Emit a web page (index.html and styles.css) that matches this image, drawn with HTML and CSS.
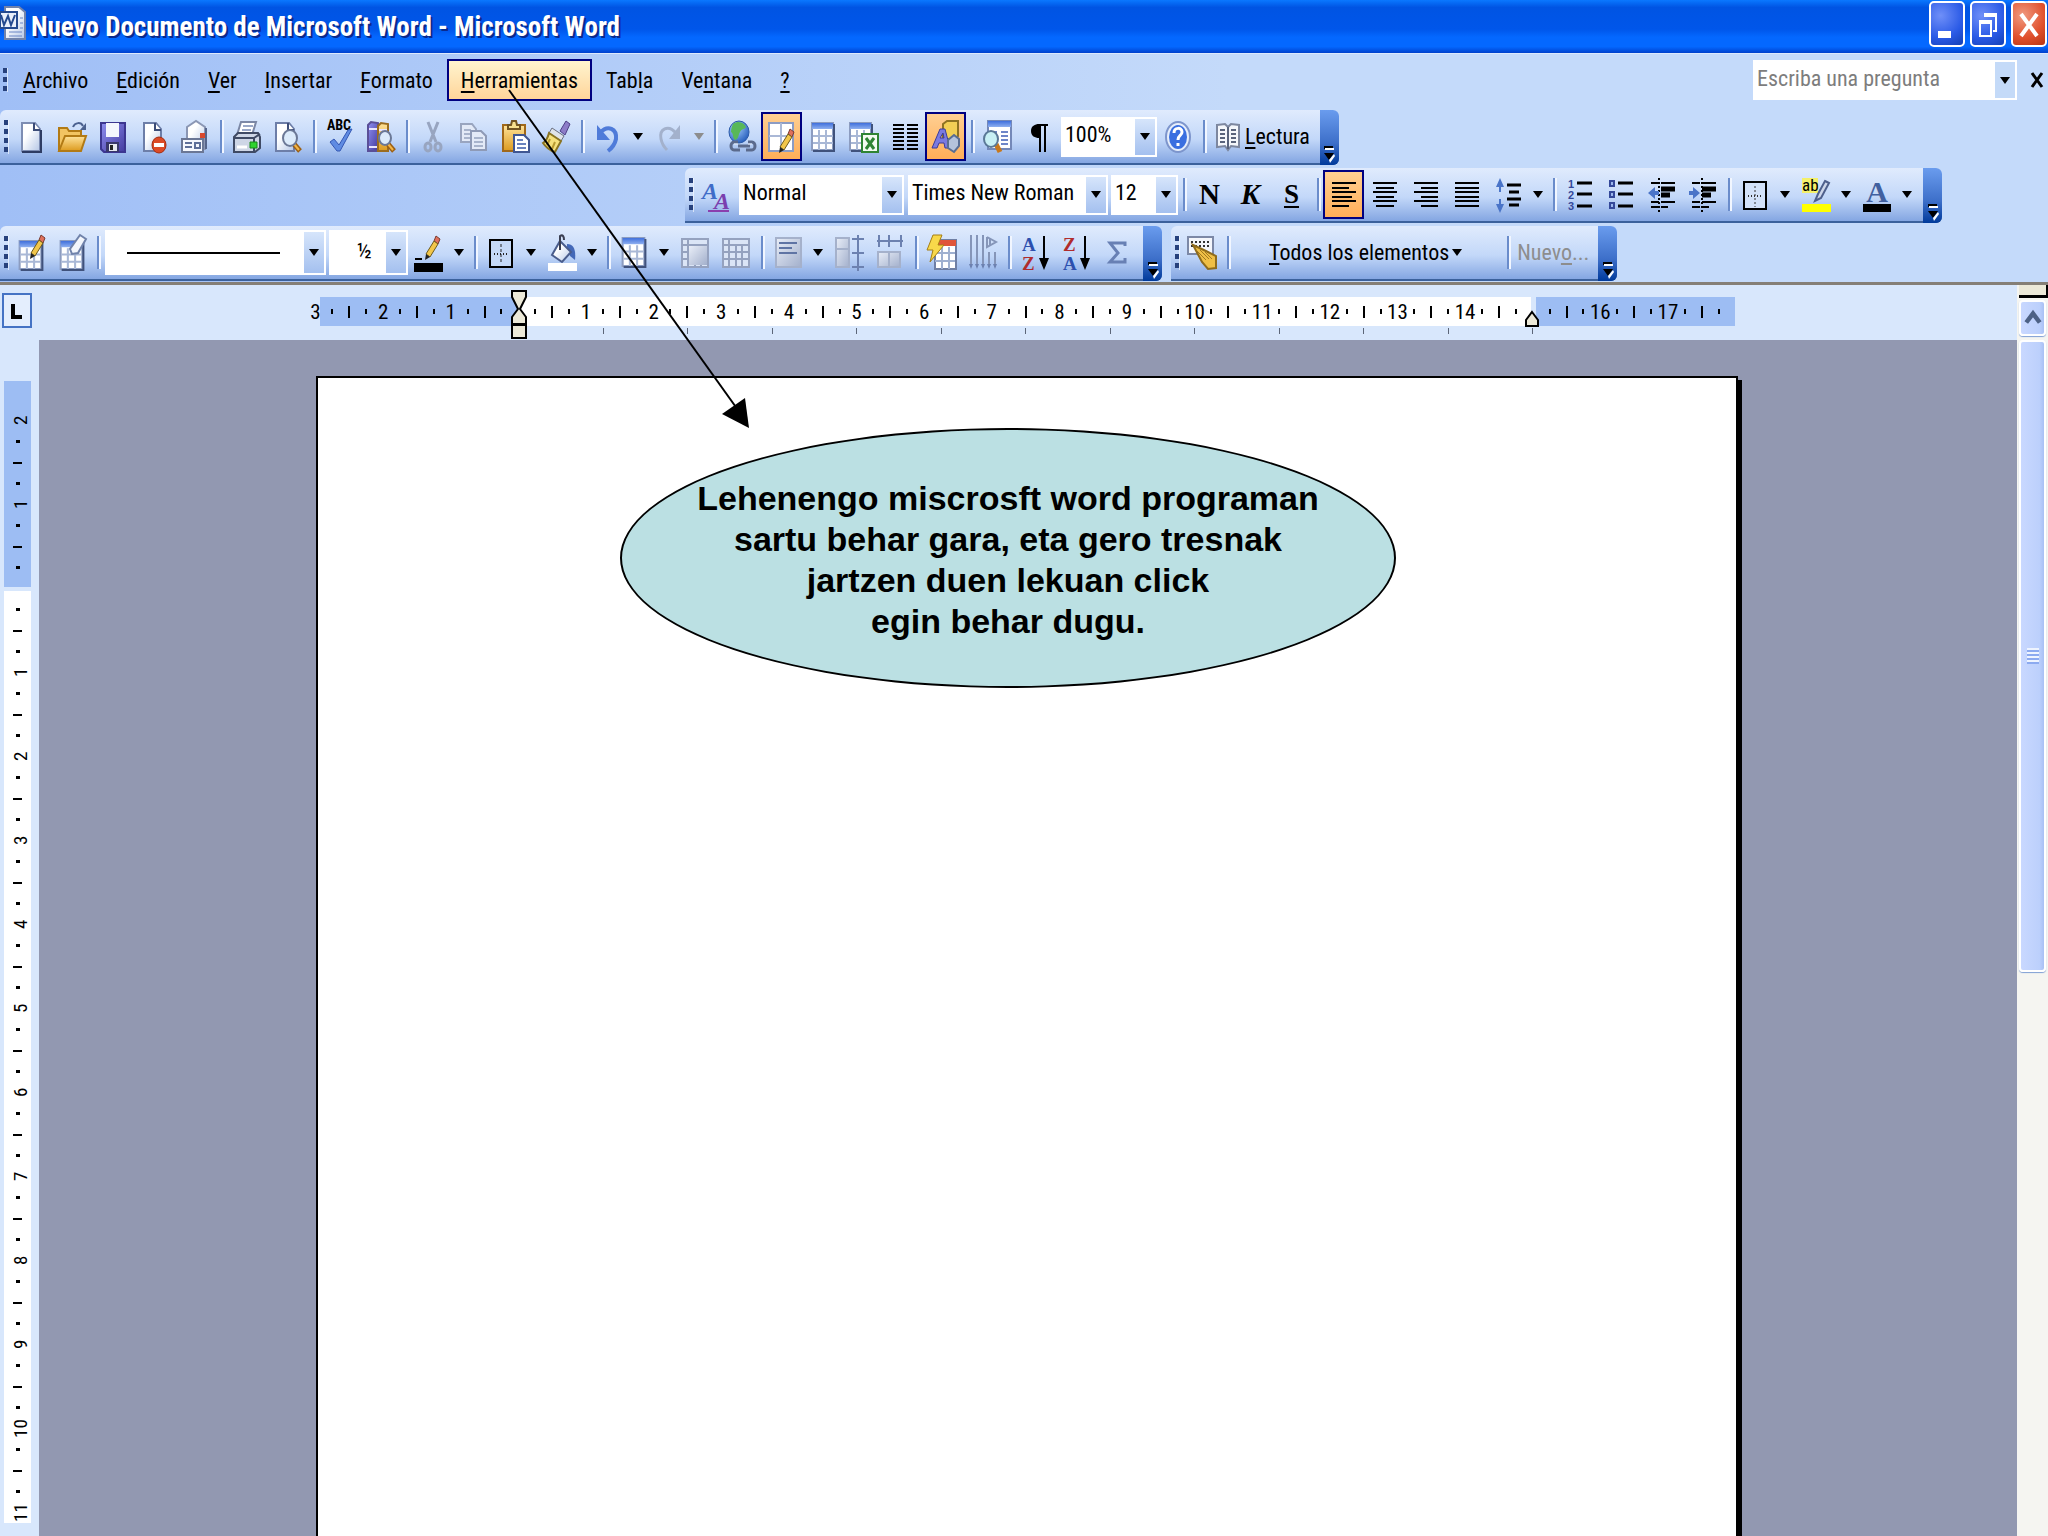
FILE: index.html
```html
<!DOCTYPE html>
<html lang="es">
<head>
    <meta charset="UTF-8">
    <meta name="viewport" content="width=device-width, initial-scale=1.0">
    <title>Nuevo Documento de Microsoft Word - Microsoft Word</title>
    <link rel="stylesheet" href="styles.css">
</head>
<body>

    <!-- shared gradients and repeated icon parts -->
    <svg class="defs" width="0" height="0" aria-hidden="true">
        <defs>
            <linearGradient id="gPaper" x1="0" y1="0" x2="1" y2="1"><stop offset="0.35" stop-color="#fff"/><stop offset="1" stop-color="#b4c6e6"/></linearGradient>
            <linearGradient id="gGrey" x1="0" y1="0" x2="1" y2="1"><stop offset="0" stop-color="#e9eef8"/><stop offset="1" stop-color="#a3b0cc"/></linearGradient>
            <linearGradient id="gFolder" x1="0" y1="0" x2="0" y2="1"><stop offset="0" stop-color="#ffe39a"/><stop offset="1" stop-color="#dc9a1e"/></linearGradient>
            <linearGradient id="gViolet" x1="0" y1="0" x2="1" y2="1"><stop offset="0" stop-color="#8f8ff0"/><stop offset="1" stop-color="#433a9e"/></linearGradient>
            <linearGradient id="gBlue" x1="0" y1="0" x2="0" y2="1"><stop offset="0" stop-color="#3f6fdc"/><stop offset="1" stop-color="#8fb0f0"/></linearGradient>
            <radialGradient id="gGlobe" cx="0.35" cy="0.3" r="0.8"><stop offset="0" stop-color="#a9d2ff"/><stop offset="1" stop-color="#1d56b8"/></radialGradient>
        </defs>
        <symbol id="pencil" viewBox="0 0 18 26">
            <path d="M13 1l4 3-2 5-4-3z" fill="#e0705c" stroke="#7a3b30"/>
            <path d="M11 6l4 3-8 13-4-3z" fill="#f2c64a" stroke="#6d5a1c"/>
            <path d="M3 19l4 3-5 3z" fill="#222"/>
        </symbol>
        <symbol id="grid" viewBox="0 0 24 30">
            <path d="M1 1h21v27H1z" fill="#fff" stroke="#8c9cc0" stroke-width="2"/>
            <path d="M1 1h21v6H1z" fill="url(#gBlue)"/>
            <path d="M2 14h20M2 21h20M8 8v20M15 8v20" stroke="#a9b8d6" stroke-width="2" fill="none"/>
            <path d="M23 2v27H2" stroke="#40527c" stroke-width="2" fill="none"/>
        </symbol>
        <symbol id="greygrid" viewBox="0 0 28 30">
            <path d="M1 1h26v28H1z" fill="#dbe5f6" stroke="#95a2bf" stroke-width="2"/>
            <path d="M1 7h26M7 1v28M14 7v22M20 7v22M1 14h26M1 21h26" stroke="#95a2bf" stroke-width="2" fill="none"/>
        </symbol>
    </svg>

    <header class="titlebar">
        <svg class="app-icon" viewBox="0 0 26 34"><path d="M5 1h14l6 5v27H5z" fill="url(#gPaper)" stroke="#7183ab" stroke-width="2"/><path d="M0 6h17v16H0z" fill="#e9effb" stroke="#24498f" stroke-width="2"/><path d="M1 9l3 10 4-9 3 9 4-10" fill="none" stroke="#24498f" stroke-width="2"/><path d="M9 26h13M20 12h3M20 17h3M20 22h3M9 30h13" stroke="#6a86c4" stroke-width="1"/></svg>
        <h1 class="title">Nuevo Documento de Microsoft Word - Microsoft Word</h1>
        <div class="window-buttons">
            <button class="win" aria-label="Minimizar"><svg viewBox="0 0 32 41"><path d="M7 28h13v7H7z" fill="#fff"/></svg></button>
            <button class="win" aria-label="Restaurar"><svg viewBox="0 0 32 41"><path d="M13 13v-1h11v16h-3" fill="none" stroke="#fff" stroke-width="2"/><path d="M12 10h13v4H12z" fill="#fff"/><path d="M8 19h11v14H8z" fill="none" stroke="#fff" stroke-width="2"/><path d="M7 17h13v4H7z" fill="#fff"/></svg></button>
            <button class="win win-close" aria-label="Cerrar"><svg viewBox="0 0 32 41"><path d="M8 11l16 22M24 11L8 33" stroke="#fff" stroke-width="4"/></svg></button>
        </div>
    </header>

    <div class="dock">
        <nav class="menubar">
            <span class="handle handle-short"></span>
            <button class="menu"><u>A</u>rchivo</button>
            <button class="menu"><u>E</u>dición</button>
            <button class="menu"><u>V</u>er</button>
            <button class="menu"><u>I</u>nsertar</button>
            <button class="menu"><u>F</u>ormato</button>
            <button class="menu menu-on"><u>H</u>erramientas</button>
            <button class="menu">Tab<u>l</u>a</button>
            <button class="menu">Ve<u>n</u>tana</button>
            <button class="menu"><u>?</u></button>
            <div class="combo ask">
                <input type="text" placeholder="Escriba una pregunta" aria-label="Escriba una pregunta">
                <span class="drop"></span>
            </div>
            <button class="close-doc" aria-label="Cerrar documento"><svg viewBox="0 0 14 16"><path d="M2 1l10 14M12 1L2 15" stroke="#000" stroke-width="3"/></svg></button>
        </nav>

        <div class="row">
            <div class="toolbar">
                <span class="handle"></span>
                <button class="tool" aria-label="Nuevo"><svg viewBox="0 0 30 34"><path d="M6 3h13l5 6v22H6z" fill="url(#gPaper)" stroke="#7d8db3" stroke-width="2"/><path d="M18 3v7h6" fill="#fff" stroke="#3d4d78" stroke-width="2"/><path d="M25 10v22H6" fill="none" stroke="#2e3c63" stroke-width="2"/></svg></button>
                <button class="tool" aria-label="Abrir"><svg viewBox="0 0 30 34"><path d="M2 31V8h8l2 3h12v7" fill="#f2c462" stroke="#b27a14" stroke-width="2"/><path d="M2 31l6-15h21l-5 15z" fill="url(#gFolder)" stroke="#b27a14" stroke-width="2"/><path d="M16 7c2-5 8-5 10-1" fill="none" stroke="#4b618f" stroke-width="2"/><path d="M29 3v7h-6z" fill="#4b618f"/></svg></button>
                <button class="tool" aria-label="Guardar"><svg viewBox="0 0 30 34"><path d="M3 3h24v29H6l-3-3z" fill="url(#gViolet)" stroke="#3c3690" stroke-width="2"/><path d="M8 3h13v14H8z" fill="#f4f6fd"/><path d="M8 22h13v10H8z" fill="#39386a"/><path d="M11 24h8v7h-8z" fill="#e6e9f0"/><path d="M12 25h3v5h-3z" fill="#222"/></svg></button>
                <button class="tool" aria-label="Permiso"><svg viewBox="0 0 30 34"><path d="M5 3h12l5 6v22H5z" fill="url(#gPaper)" stroke="#6d7ea8" stroke-width="2"/><path d="M16 3v7h6" fill="#fff" stroke="#3d4d78" stroke-width="2"/><ellipse cx="20" cy="25" rx="7" ry="8" fill="#dc4a26" stroke="#a42c10"/><path d="M15 23h10v4H15z" fill="#fff"/></svg></button>
                <button class="tool" aria-label="Correo electrónico"><svg viewBox="0 0 30 34"><path d="M7 7l9-6 9 6v22H7z" fill="url(#gPaper)" stroke="#8b97b4" stroke-width="2"/><path d="M20 13h5v5h-5z" fill="#d9482c"/><path d="M2 19h21v13H2z" fill="#f6f8fd" stroke="#6b7795" stroke-width="2"/><path d="M5 23h7M5 27h7M15 23h5v5h-5z" fill="none" stroke="#5f7099" stroke-width="2"/><path d="M26 8v21" stroke="#56658b" stroke-width="2"/></svg></button>
                <span class="sep"></span>
                <button class="tool" aria-label="Imprimir"><svg viewBox="0 0 30 34"><path d="M9 2h15l-4 13H5z" fill="#fff" stroke="#7c88a6" stroke-width="2"/><path d="M11 6h10M10 10h9" stroke="#9aa8c8" stroke-width="2"/><path d="M2 17l4-4h20l2 4v11l-5 4H2z" fill="#ced6e6" stroke="#3f4a64" stroke-width="2"/><path d="M2 18h20v14M22 18l6-4" fill="none" stroke="#3f4a64" stroke-width="2"/><path d="M5 27h10" stroke="#fff" stroke-width="3"/><path d="M18 22h7v6h-7z" fill="#2fd32f" stroke="#168a16"/></svg></button>
                <button class="tool" aria-label="Vista preliminar"><svg viewBox="0 0 30 34"><path d="M3 3h13l5 6v22H3z" fill="url(#gPaper)" stroke="#6d7ea8" stroke-width="2"/><path d="M15 3v7h6" fill="#fff" stroke="#3d4d78" stroke-width="2"/><path d="M21 24l6 7" stroke="#9c5f12" stroke-width="5"/><path d="M21 24l5 6" stroke="#f3b545" stroke-width="2"/><ellipse cx="17" cy="18" rx="7" ry="8" fill="#dcebfb" stroke="#6b7896" stroke-width="2"/></svg></button>
                <span class="sep"></span>
                <button class="tool" aria-label="Ortografía"><svg viewBox="0 0 30 34"><text x="14" y="10" text-anchor="middle" class="glyph-abc">ABC</text><path d="M5 22l4-3 5 6 9-15 4-1-12 22h-3z" fill="#5f8be2" stroke="#3558b4"/></svg></button>
                <button class="tool" aria-label="Referencia"><svg viewBox="0 0 30 34"><path d="M2 5l3-3 7 1v28H2z" fill="url(#gViolet)" stroke="#5a4f98" stroke-width="2"/><path d="M12 6l3-3 7 1v27H12z" fill="url(#gFolder)" stroke="#9b6c1f" stroke-width="2"/><path d="M3 9h8M13 10h8M3 27h8" stroke="#e9e4ff" stroke-width="2"/><path d="M22 24l6 7" stroke="#9c5f12" stroke-width="5"/><path d="M22 24l5 6" stroke="#f3b545" stroke-width="2"/><ellipse cx="19" cy="18" rx="6" ry="7" fill="#dcebfb" stroke="#6b7896" stroke-width="2"/></svg></button>
                <span class="sep"></span>
                <button class="tool" aria-label="Cortar" disabled><svg viewBox="0 0 30 34"><path d="M10 2l8 20M20 2l-8 20" stroke="#98a5c0" stroke-width="3"/><ellipse cx="10" cy="27" rx="3" ry="4" fill="none" stroke="#98a5c0" stroke-width="3"/><ellipse cx="20" cy="27" rx="3" ry="4" fill="none" stroke="#98a5c0" stroke-width="3"/></svg></button>
                <button class="tool" aria-label="Copiar" disabled><svg viewBox="0 0 30 34"><path d="M2 4h11l4 5v13H2z" fill="#e3eaf7" stroke="#99a5bf" stroke-width="2"/><path d="M5 10h7M5 14h7M5 18h7" stroke="#a8b4cc" stroke-width="2"/><path d="M12 11h10l5 5v14H12z" fill="#e3eaf7" stroke="#8e9ab6" stroke-width="2"/><path d="M15 18h9M15 22h9M15 26h9" stroke="#a8b4cc" stroke-width="2"/></svg></button>
                <button class="tool" aria-label="Pegar"><svg viewBox="0 0 30 34"><path d="M3 5h22v26H3z" fill="url(#gFolder)" stroke="#a0681a" stroke-width="2"/><path d="M8 9V5h3l1-4h4l1 4h3v4z" fill="#f6e08d" stroke="#725420" stroke-width="2"/><path d="M14 15h10l5 5v12H14z" fill="#fff" stroke="#3f5692" stroke-width="2"/><path d="M17 20h6M17 24h9M17 28h9" stroke="#6a83bd" stroke-width="2"/></svg></button>
                <button class="tool" aria-label="Copiar formato"><svg viewBox="0 0 30 34"><path d="M19 11l6-10 4 3-5 11z" fill="#8d7cc8" stroke="#4e3f86"/><path d="M11 8l12 8-3 5L8 13z" fill="#dfe3ea" stroke="#6a6f80"/><path d="M8 13l12 8-6 11c-5-1-10-6-12-9 3-2 5-6 6-10z" fill="#f5e07c" stroke="#8a7422" stroke-width="2"/><path d="M9 19l-3 6M14 22l-3 7" stroke="#b89a32" stroke-width="2"/></svg></button>
                <span class="sep"></span>
                <button class="tool" aria-label="Deshacer"><svg viewBox="0 0 30 34"><path d="M7 13c8-9 17-4 16 6-1 5-4 9-8 12" fill="none" stroke="#4f7bd9" stroke-width="4"/><path d="M4 5v15h13z" fill="#4f7bd9"/></svg></button>
                <button class="arrow" aria-label="Deshacer lista"></button>
                <button class="tool" aria-label="Rehacer" disabled><svg viewBox="0 0 30 34"><path d="M22 13C14 4 5 9 7 19c1 5 3 8 6 11" fill="none" stroke="#a3b1cc" stroke-width="3"/><path d="M26 5v14H15z" fill="#a3b1cc"/></svg></button>
                <button class="arrow" aria-label="Rehacer lista" disabled></button>
                <span class="sep"></span>
                <button class="tool" aria-label="Hipervínculo"><svg viewBox="0 0 30 34"><ellipse cx="13" cy="12" rx="10" ry="11" fill="url(#gGlobe)" stroke="#2b5aa8"/><path d="M7 4c6-4 11-1 13 3-2 3-4 1-6 5-2 3-1 7-5 8-3-3-1-6-4-8 0-3 1-6 2-8z" fill="#58b858"/><path d="M12 22h-4a3 4 0 0 0 0 8h6M22 22h4a3 4 0 0 1 0 8h-6M12 26h12" fill="none" stroke="#5b6a8c" stroke-width="3"/><path d="M8 24h4M22 24h4" stroke="#e8eef8"/></svg></button>
                <button class="tool tool-on" aria-label="Tablas y bordes"><svg viewBox="0 0 30 34"><path d="M2 3h24v28H2z" fill="#fff" stroke="#8c9cc4" stroke-width="2"/><path d="M2 16h24M14 3v28" stroke="#aab8d6" stroke-width="2"/><use href="#pencil" x="10" y="8" width="18" height="26"/></svg></button>
                <button class="tool" aria-label="Insertar tabla"><svg viewBox="0 0 30 34"><use href="#grid" x="3" y="2" width="24" height="30"/></svg></button>
                <button class="tool" aria-label="Insertar hoja de Excel"><svg viewBox="0 0 30 34"><use href="#grid" x="0" y="2" width="24" height="30"/><path d="M13 14h16v18H13z" fill="#f4fbf2" stroke="#2f8434" stroke-width="2"/><path d="M17 18l8 11M25 18l-8 11" stroke="#2f8434" stroke-width="3"/></svg></button>
                <button class="tool" aria-label="Columnas"><svg viewBox="0 0 30 34"><path d="M3 5h11M3 9h11M3 13h11M3 17h11M3 21h11M3 25h11M3 29h11M17 5h11M17 9h11M17 13h11M17 17h11M17 21h11M17 25h11M17 29h11" stroke="#000" stroke-width="2"/></svg></button>
                <button class="tool tool-on" aria-label="Dibujo"><svg viewBox="0 0 30 34"><path d="M12 4l4-3h11v15l-3 3H12z" fill="#f3cf55" stroke="#8f7322" stroke-width="2"/><path d="M1 28L9 9h5l5 19h-5l-1-5H8l-2 5zM9 18h4l-1-5z" fill="#7a7ae0" stroke="#3c3c98"/><path d="M17 20l6-5 5 4v7l-5 6-6-4z" fill="#b5c3dc" stroke="#5a6d92" stroke-width="2"/></svg></button>
                <span class="sep"></span>
                <button class="tool" aria-label="Mapa del documento"><svg viewBox="0 0 30 34"><path d="M5 1h23v28H5z" fill="#fff" stroke="#7488b8" stroke-width="2"/><path d="M5 1h23v6H5z" fill="url(#gBlue)"/><path d="M8 12h6M18 12h7M18 16h7M18 20h7M18 24h7" stroke="#6e86c8" stroke-width="2"/><path d="M13 24l4 8" stroke="#c8781c" stroke-width="5"/><ellipse cx="8" cy="19" rx="7" ry="8" fill="#c8f0f4" stroke="#5a7896" stroke-width="2"/></svg></button>
                <button class="tool" aria-label="Mostrar u ocultar"><svg viewBox="0 0 30 34"><path d="M24 4v2h-2v26h-2V6h-3v26h-2V18c-4 0-8-2-8-7s4-7 8-7z"/></svg></button>
                <div class="combo zoom"><select aria-label="Zoom"><option>100%</option></select><span class="drop"></span></div>
                <button class="tool" aria-label="Ayuda"><svg viewBox="0 0 30 34"><ellipse cx="15" cy="17" rx="12" ry="15" fill="#e6eefb" stroke="#7d95cc" stroke-width="2"/><ellipse cx="15" cy="17" rx="9" ry="12" fill="#3a6fe0"/><path d="M11 13c0-6 8-6 8-1 0 4-4 3-4 8M15 23v3" fill="none" stroke="#fff" stroke-width="3"/></svg></button>
                <span class="sep"></span>
                <button class="tool-text"><svg viewBox="0 0 24 34"><path d="M1 5l8-1 3 3 3-3 8 1v22l-8-1-3 4-3-4-8 1z" fill="#f5f7fb" stroke="#7d879f" stroke-width="2"/><path d="M12 7v22M4 10h5M4 14h5M4 18h5M4 22h5M15 10h5M15 14h5M15 18h5M15 22h5" stroke="#5a647c" stroke-width="2"/></svg><span><u>L</u>ectura</span></button>
                <button class="more" aria-label="Opciones"><svg viewBox="0 0 12 18"><path d="M1 1h9v3H1z"/><path d="M2 3h9v2H2z" fill="#fff"/><path d="M1 8h10l-5 7z"/><path d="M11 9l1 2-5 7-1-3z" fill="#fff"/></svg></button>
            </div>
        </div>

        <div class="row row-format">
            <div class="toolbar">
                <span class="handle"></span>
                <button class="tool" aria-label="Estilos y formato"><svg viewBox="0 0 30 34"><text x="1" y="21" class="glyph-style">A</text><text x="13" y="31" class="glyph-style glyph-violet">A</text><path d="M7 33h21" stroke="#8a3fae" stroke-width="2"/></svg></button>
                <div class="combo style"><select aria-label="Estilo"><option>Normal</option></select><span class="drop"></span></div>
                <div class="combo font"><select aria-label="Fuente"><option>Times New Roman</option></select><span class="drop"></span></div>
                <div class="combo size"><select aria-label="Tamaño de fuente"><option>12</option></select><span class="drop"></span></div>
                <span class="sep"></span>
                <button class="tool letter">N</button>
                <button class="tool letter letter-k">K</button>
                <button class="tool letter letter-s"><u>S</u></button>
                <span class="sep"></span>
                <button class="tool tool-on" aria-label="Alinear a la izquierda"><svg viewBox="0 0 30 34"><path d="M3 5h24M3 10h17M3 14h24M3 19h20M3 23h24M3 28h17" stroke="#000" stroke-width="2"/></svg></button>
                <button class="tool" aria-label="Centrar"><svg viewBox="0 0 30 34"><path d="M3 5h24M6 10h18M3 14h24M6 19h18M3 23h24M6 28h18" stroke="#000" stroke-width="2"/></svg></button>
                <button class="tool" aria-label="Alinear a la derecha"><svg viewBox="0 0 30 34"><path d="M3 5h24M10 10h17M3 14h24M10 19h17M3 23h24M10 28h17" stroke="#000" stroke-width="2"/></svg></button>
                <button class="tool" aria-label="Justificar"><svg viewBox="0 0 30 34"><path d="M3 5h24M3 10h24M3 14h24M3 19h24M3 23h24M3 28h24" stroke="#000" stroke-width="2"/></svg></button>
                <button class="tool" aria-label="Interlineado"><svg viewBox="0 0 30 34"><path d="M14 7h14M16 14h10M14 21h14M16 27h10" stroke="#000" stroke-width="3"/><path d="M7 4v10M7 21v10" stroke="#4a74c8" stroke-width="2"/><path d="M7 0l4 9H3zM7 35l4-9H3z" fill="#4a74c8"/></svg></button>
                <button class="arrow" aria-label="Interlineado lista"></button>
                <span class="sep"></span>
                <button class="tool" aria-label="Numeración"><svg viewBox="0 0 30 34"><text x="3" y="10" class="glyph-num">1</text><text x="3" y="21" class="glyph-num">2</text><text x="3" y="32" class="glyph-num">3</text><path d="M12 5h15M12 16h15M12 28h15" stroke="#000" stroke-width="3"/></svg></button>
                <button class="tool" aria-label="Viñetas"><svg viewBox="0 0 30 34"><path d="M4 3h4v5H4zM4 14h4v5H4zM4 25h4v5H4z" fill="#9db8ee" stroke="#34489a" stroke-width="2"/><path d="M12 5h15M12 16h15M12 28h15" stroke="#000" stroke-width="3"/></svg></button>
                <button class="tool" aria-label="Reducir sangría"><svg viewBox="0 0 30 34"><path d="M4 5h8M14 5h14M4 24h8M14 24h14M4 29h8M14 29h7" stroke="#000" stroke-width="2"/><path d="M14 11h14M14 17h9" stroke="#000" stroke-width="5"/><path d="M12 0v34" stroke="#000" stroke-width="2" stroke-dasharray="2 2"/><path d="M1 15l7-6v4h4v4H8v4z" fill="#4a74c8"/></svg></button>
                <button class="tool" aria-label="Aumentar sangría"><svg viewBox="0 0 30 34"><path d="M4 5h8M14 5h14M4 24h8M14 24h14M4 29h8M14 29h7" stroke="#000" stroke-width="2"/><path d="M14 11h14M14 17h9" stroke="#000" stroke-width="5"/><path d="M14 0v34" stroke="#000" stroke-width="2" stroke-dasharray="2 2"/><path d="M12 15L5 9v4H1v4h4v4z" fill="#4a74c8"/></svg></button>
                <span class="sep"></span>
                <button class="tool" aria-label="Bordes"><svg viewBox="0 0 30 34"><path d="M4 4h22v27H4z" fill="#d3e2f9" stroke="#000" stroke-width="2"/><path d="M15 8v21" stroke="#333" stroke-width="1" stroke-dasharray="2 2"/><path d="M8 18h15" stroke="#333" stroke-width="2" stroke-dasharray="1 2"/></svg></button>
                <button class="arrow" aria-label="Bordes lista"></button>
                <button class="tool" aria-label="Resaltar"><svg viewBox="0 0 30 34"><path d="M1 0h16v15H1z" fill="#f4f06a"/><text x="1" y="13" class="glyph-ab">ab</text><path d="M24 3l4 2-8 15-6 3 3-7z" fill="#cdd6ea" stroke="#4e5f8c" stroke-width="2"/><path d="M1 26h29v8H1z" fill="#ffff00"/></svg></button>
                <button class="arrow" aria-label="Resaltar lista"></button>
                <button class="tool" aria-label="Color de fuente"><svg viewBox="0 0 30 34"><text x="15" y="24" text-anchor="middle" class="glyph-color">A</text><path d="M1 26h28v8H1z"/></svg></button>
                <button class="arrow" aria-label="Color de fuente lista"></button>
                <button class="more" aria-label="Opciones"><svg viewBox="0 0 12 18"><path d="M1 1h9v3H1z"/><path d="M2 3h9v2H2z" fill="#fff"/><path d="M1 8h10l-5 7z"/><path d="M11 9l1 2-5 7-1-3z" fill="#fff"/></svg></button>
            </div>
        </div>

        <div class="row">
            <div class="toolbar">
                <span class="handle"></span>
                <button class="tool" aria-label="Dibujar tabla"><svg viewBox="0 0 30 38"><use href="#grid" x="2" y="6" width="26" height="31"/><use href="#pencil" x="12" y="0" width="18" height="26"/></svg></button>
                <button class="tool" aria-label="Borrador"><svg viewBox="0 0 30 38"><use href="#grid" x="2" y="6" width="26" height="31"/><path d="M23 1l6 4-8 14-6 1-2-5z" fill="#f3f6fc" stroke="#7082aa" stroke-width="2"/></svg></button>
                <span class="sep"></span>
                <div class="combo line"><select class="line-style" aria-label="Estilo de línea"><option></option></select><span class="drop"></span></div>
                <div class="combo weight"><select aria-label="Grosor de línea"><option>½</option></select><span class="drop"></span></div>
                <button class="tool" aria-label="Color de borde"><svg viewBox="0 0 30 38"><path d="M1 25h7" stroke="#000" stroke-width="2"/><use href="#pencil" x="9" y="1" width="18" height="26"/><path d="M0 29h29v9H0z"/></svg></button>
                <button class="arrow" aria-label="Color de borde lista"></button>
                <span class="sep"></span>
                <button class="tool" aria-label="Borde exterior"><svg viewBox="0 0 30 38"><path d="M4 6h22v27H4z" fill="#c5d9f7" stroke="#000" stroke-width="2"/><path d="M15 10v20" stroke="#222" stroke-width="1" stroke-dasharray="3 2"/><path d="M8 20h15" stroke="#222" stroke-width="2" stroke-dasharray="1 2"/></svg></button>
                <button class="arrow" aria-label="Borde exterior lista"></button>
                <button class="tool" aria-label="Color de sombreado"><svg viewBox="0 0 30 38"><path d="M20 10c7 0 9 6 8 16l-5-4-3-9z" fill="#4469b8"/><path d="M13 7l11 11-9 10-10-7z" fill="url(#gPaper)" stroke="#4a5d8c" stroke-width="2"/><path d="M13 16V2c3-2 4 1 4 4" fill="none" stroke="#3b3f52" stroke-width="2"/><path d="M1 29h29v8H1z" fill="#fff"/></svg></button>
                <button class="arrow" aria-label="Color de sombreado lista"></button>
                <span class="sep"></span>
                <button class="tool" aria-label="Insertar tabla"><svg viewBox="0 0 30 38"><use href="#grid" x="2" y="3" width="26" height="31"/></svg></button>
                <button class="arrow" aria-label="Insertar tabla lista"></button>
                <button class="tool" aria-label="Combinar celdas" disabled><svg viewBox="0 0 30 38"><use href="#greygrid" x="1" y="4" width="28" height="30"/><path d="M9 12h18v19H9z" fill="url(#gGrey)"/></svg></button>
                <button class="tool" aria-label="Dividir celdas" disabled><svg viewBox="0 0 30 38"><use href="#greygrid" x="1" y="4" width="28" height="30"/></svg></button>
                <span class="sep"></span>
                <button class="tool" aria-label="Alinear celda" disabled><svg viewBox="0 0 30 38"><path d="M3 4h25v29H3z" fill="url(#gGrey)" stroke="#a5b1cb" stroke-width="2"/><path d="M6 9h18M6 14h13M6 19h18" stroke="#5f74a4" stroke-width="2"/></svg></button>
                <button class="arrow" aria-label="Alinear celda lista"></button>
                <button class="tool" aria-label="Distribuir filas" disabled><svg viewBox="0 0 30 38"><path d="M2 4h13v11H2zM2 15h13v18H2z" fill="url(#gGrey)" stroke="#a5b1cb" stroke-width="2"/><path d="M18 5h12M18 19h12M18 33h12M24 1v36" stroke="#6c81b0" stroke-width="2"/></svg></button>
                <button class="tool" aria-label="Distribuir columnas" disabled><svg viewBox="0 0 30 38"><path d="M3 18h11v15H3zM14 18h11v15H14z" fill="url(#gGrey)" stroke="#a5b1cb" stroke-width="2"/><path d="M2 7h26M4 1v12M14 1v12M26 1v12" stroke="#6c81b0" stroke-width="2"/></svg></button>
                <span class="sep"></span>
                <button class="tool" aria-label="Autoformato de tablas"><svg viewBox="0 0 30 38"><path d="M8 6h21v29H8z" fill="#fff" stroke="#6f7fa4" stroke-width="2"/><path d="M8 6h21v6H8z" fill="#e0553a"/><path d="M8 19h20M8 27h20M15 13v22M22 13v22" stroke="#9fb0d0" stroke-width="2"/><path d="M6 1h9l-4 10h6L3 28l3-12H0z" fill="#f8d84a" stroke="#a67f14"/></svg></button>
                <button class="tool" aria-label="Cambiar dirección del texto" disabled><svg viewBox="0 0 30 38"><path d="M3 1v32M9 1v32M15 1v32M21 18v15M27 18v15" stroke="#8595b8" stroke-width="2"/><path d="M1 30h4l-2 5zM7 30h4l-2 5zM13 30h4l-2 5zM19 30h4l-2 5zM25 30h4l-2 5z" fill="#6c81b0"/><path d="M19 3l9 5-9 5V3M22 5v6" fill="none" stroke="#8595b8" stroke-width="2"/></svg></button>
                <span class="sep"></span>
                <button class="tool" aria-label="Orden ascendente"><svg viewBox="0 0 30 38"><text x="2" y="17" class="glyph-sort glyph-blue">A</text><text x="2" y="36" class="glyph-sort glyph-red">Z</text><path d="M24 2v28" stroke="#000" stroke-width="2"/><path d="M19 24h10l-5 12z"/></svg></button>
                <button class="tool" aria-label="Orden descendente"><svg viewBox="0 0 30 38"><text x="2" y="17" class="glyph-sort glyph-red">Z</text><text x="2" y="36" class="glyph-sort glyph-blue">A</text><path d="M24 2v28" stroke="#000" stroke-width="2"/><path d="M19 24h10l-5 12z"/></svg></button>
                <button class="tool" aria-label="Autosuma" disabled><svg viewBox="0 0 30 38"><path d="M23 12V9H8l8 10-8 9h15v-4" fill="none" stroke="#6880b4" stroke-width="3"/></svg></button>
                <button class="more" aria-label="Opciones"><svg viewBox="0 0 12 18"><path d="M1 1h9v3H1z"/><path d="M2 3h9v2H2z" fill="#fff"/><path d="M1 8h10l-5 7z"/><path d="M11 9l1 2-5 7-1-3z" fill="#fff"/></svg></button>
            </div>
            <div class="toolbar">
                <span class="handle"></span>
                <button class="tool" aria-label="Crear autotexto"><svg viewBox="0 0 30 38"><path d="M1 3h25v17H1z" fill="#f4f6fb" stroke="#7c88a6" stroke-width="2"/><path d="M4 8h20M4 12h20" stroke="#333" stroke-width="2" stroke-dasharray="2 2"/><path d="M6 11l13 6 10 5v12l-8 1-6-7z" fill="#efbf45" stroke="#8f6c1c" stroke-width="2"/><path d="M9 16l10 10M13 16l9 9M18 18l7 7" stroke="#a27a20" stroke-width="1"/></svg></button>
                <span class="sep"></span>
                <button class="tool-text elements"><span><u>T</u>odos los elementos</span><span class="tri"></span></button>
                <span class="sep"></span>
                <button class="tool-text new-entry" disabled><span>Nuev<u>o</u>...</span></button>
                <button class="more" aria-label="Opciones"><svg viewBox="0 0 12 18"><path d="M1 1h9v3H1z"/><path d="M2 3h9v2H2z" fill="#fff"/><path d="M1 8h10l-5 7z"/><path d="M11 9l1 2-5 7-1-3z" fill="#fff"/></svg></button>
            </div>
        </div>
    </div>

    <main class="workspace">
        <div class="view">
            <div class="ruler-row">
                <button class="tab-type" aria-label="Tabulación izquierda"><svg viewBox="0 0 12 16"><path d="M2 1v13h9" fill="none" stroke="#000" stroke-width="4"/></svg></button>
                <div class="ruler-h">
                    <div class="marks marks-h" id="marksH"></div>
                    <div class="tabs" id="tabs"></div>
                    <svg class="indent indent-left" viewBox="0 0 16 49"><path d="M1 1h14v6L9 19l6 8v7H1v-7l6-8L1 7z" fill="#ece9d8" stroke="#000" stroke-width="2"/><path d="M1 35h14v13H1z" fill="#ece9d8" stroke="#000" stroke-width="2"/></svg>
                    <svg class="indent indent-right" viewBox="0 0 16 18"><path d="M8 2l6 8v6H2v-6z" fill="#ece9d8" stroke="#000" stroke-width="2"/></svg>
                </div>
            </div>
            <div class="canvas">
                <div class="ruler-v"><div class="marks marks-v" id="marksV"></div></div>
                <div class="desk"><article class="page"></article></div>
            </div>
        </div>
        <div class="scrollbar">
            <span class="split"></span>
            <button class="scroll-up" aria-label="Subir"><svg viewBox="0 0 16 16"><path d="M2 12l6-8 6 8" fill="none" stroke="#4d6185" stroke-width="4"/></svg></button>
            <div class="thumb"><span class="grip"></span></div>
        </div>
    </main>

    <svg class="pointer" viewBox="0 0 260 350" aria-hidden="true"><path d="M9 5l229 320" stroke="#000" stroke-width="2"/><path d="M249 343l-27-14 23-16z"/></svg>
    <p class="callout">Lehenengo miscrosft word programan<br>sartu behar gara, eta gero tresnak<br>jartzen duen lekuan click<br>egin behar dugu.</p>

    <script>
        // four marks per centimetre: number, dot, half line, dot
        function addMarks(box, from, to, hidden) {
            for (let i = from; i <= to; i++) {
                const mark = document.createElement('span');
                const rest = Math.abs(i) % 4;
                if (hidden.includes(i)) {
                    mark.className = 'mark';
                } else if (rest === 0) {
                    mark.className = 'mark num';
                    mark.textContent = Math.abs(i) / 4;
                } else {
                    mark.className = rest === 2 ? 'mark half' : 'mark dot';
                }
                box.appendChild(mark);
            }
        }

        addMarks(document.getElementById('marksH'), -12, 71, [0, 60]);
        addMarks(document.getElementById('marksV'), -8, 44, [0]);

        // default tab stops
        for (let i = 0; i < 12; i++) {
            document.getElementById('tabs').appendChild(document.createElement('span'));
        }
    </script>

</body>
</html>
```
FILE: styles.css
```css
* {
    box-sizing: border-box;
}
body {
    margin: 0;
    height: 100vh;
    display: flex;
    flex-direction: column;
    position: relative;
    overflow: hidden;
    font-family: "Roboto Condensed", "Liberation Sans", sans-serif;
    font-size: 22px;
    color: #000;
}
button, input, select {
    font: inherit;
    color: inherit;
    margin: 0;
    padding: 0;
    border: none;
    background: none;
}
u {
    text-underline-offset: 3px;
    text-decoration-thickness: 2px;
}
.defs {
    position: absolute;
}

/* Barra de título */
.titlebar {
    display: flex;
    align-items: center;
    height: 53px;
    padding-right: 1px;
    background: linear-gradient(#0a78ff 0, #0054e3 14%, #0056ea 55%, #0468ff 70%, #0468ff 88%, #0040cc 100%);
}
.app-icon {
    width: 26px;
    height: 34px;
    margin-top: -8px;
}
.title {
    margin: 0 auto 0 5px;
    font-size: 27px;
    font-weight: bold;
    line-height: 48px;
    color: #fff;
    text-shadow: 2px 2px 0 #0a2a8c;
}
.window-buttons {
    display: flex;
    gap: 5px;
    margin-bottom: 6px;
}
.win {
    width: 36px;
    height: 46px;
    border: 2px solid #fff;
    border-radius: 5px;
    background: radial-gradient(circle at 30% 30%, #6f8ff8, #2a5ae6 60%, #1340b4);
}
.win svg {
    display: block;
    width: 32px;
    height: 41px;
}
.win-close {
    background: radial-gradient(circle at 30% 30%, #f09a80, #e0502c 60%, #b83412);
}

/* Zona de menús y barras */
.dock {
    padding-bottom: 1px;
    background: linear-gradient(90deg, #a0bff6, #c4dafa 60%);
    border-top: 1px solid #dce8fc;
    border-bottom: 3px solid #857f76;
}
.menubar {
    display: flex;
    align-items: center;
    height: 56px;
    padding: 0 4px 4px 3px;
}
.handle {
    width: 4px;
    height: 34px;
    margin: 0 2px 0 4px;
    background: repeating-linear-gradient(#27417c 0 5px, transparent 5px 9px);
    box-shadow: 1px 0 0 rgba(255, 255, 255, 0.6);
}
.handle-short {
    height: 24px;
    margin: 0 2px 0 0;
}
.menu {
    height: 42px;
    padding: 0 12px;
    border: 2px solid transparent;
}
.menu-on {
    border-color: #000080;
    background: linear-gradient(#fff4cf, #ffd59a);
}
.ask {
    width: 264px;
    height: 40px;
    margin-left: auto;
}
.close-doc {
    width: 14px;
    margin-left: 13px;
}
.close-doc svg {
    display: block;
    width: 14px;
    height: 16px;
}
.row {
    display: flex;
    gap: 9px;
    height: 55px;
    margin-bottom: 3px;
}
.row:last-child {
    margin-bottom: 0;
}
.row-format {
    padding-left: 685px;
}
.toolbar {
    display: flex;
    align-items: center;
    border-bottom: 2px solid #3b619c;
    border-radius: 6px 6px 6px 0;
    background: linear-gradient(#e0ebfd, #c3d8f9 55%, #84a6e2);
}
.tool {
    width: 41px;
    height: 49px;
    display: flex;
    align-items: center;
    justify-content: center;
    border: 2px solid transparent;
}
.tool svg {
    flex: none;
    width: 30px;
    overflow: visible;
}
.tool-on {
    border-color: #000080;
    background: linear-gradient(#ffcf92, #ffae58);
}
.tool-text {
    display: flex;
    align-items: center;
    height: 49px;
    gap: 5px;
    padding: 0 4px 0 7px;
}
.tool-text svg {
    width: 24px;
    height: 34px;
}
.tool-text:disabled {
    color: #8d8d8d;
}
.elements {
    gap: 3px;
    padding: 0 40px 0 36px;
}
.new-entry {
    padding: 0 3px 0 4px;
}
.sep {
    width: 2px;
    height: 33px;
    margin: 0 4px 0 5px;
    background: #6a8ccb;
    box-shadow: 2px 0 0 #f1f6ff;
}
.arrow {
    width: 20px;
    height: 49px;
    display: flex;
    align-items: center;
    justify-content: center;
}
.arrow::before, .drop::before, .tri {
    content: "";
    border: 5px solid transparent;
    border-top: 7px solid #000;
    border-bottom: none;
}
.arrow:disabled::before {
    border-top-color: #8d8d8d;
}
.more {
    align-self: stretch;
    width: 19px;
    margin: 0 0 -2px 6px;
    display: flex;
    align-items: flex-end;
    justify-content: center;
    padding-bottom: 2px;
    border-radius: 0 6px 6px 0;
    background: linear-gradient(#6a9cee, #3d6fc9 60%, #003a9b);
}
.more svg {
    width: 12px;
    height: 18px;
}

/* Listas desplegables */
.combo {
    display: flex;
    height: 40px;
    border: 2px solid #fff;
    background: #fff;
}
.combo select, .combo input {
    flex: 1;
    min-width: 0;
    padding: 0 0 4px 2px;
    appearance: none;
    outline: none;
}
.combo input::placeholder {
    color: #7d7d7d;
    opacity: 1;
}
.drop {
    width: 20px;
    display: flex;
    align-items: center;
    justify-content: center;
    background: linear-gradient(#d6e5fb, #a4c0ef);
    pointer-events: none;
}
.ask .drop {
    background: #c4daf8;
}
.zoom {
    width: 96px;
    margin-left: 2px;
}
.style {
    width: 165px;
    margin: 0 4px 0 3px;
}
.font {
    width: 200px;
    margin-right: 3px;
}
.size {
    width: 67px;
}
.line, .weight {
    height: 45px;
}
.line {
    width: 221px;
    margin: 0 3px 0 2px;
}
.combo .line-style {
    margin: 0 24px 0 20px;
    background: linear-gradient(#000, #000) center / 100% 2px no-repeat;
}
.weight {
    width: 79px;
}
.combo.weight select {
    padding-left: 26px;
}

/* Letras de los iconos */
.letter {
    font: bold 29px "Liberation Serif", serif;
}
.letter-k {
    font-style: italic;
}
.letter-s {
    font-size: 27px;
}
.glyph-abc {
    font: bold 14px "Roboto Condensed", sans-serif;
}
.glyph-style {
    font: italic bold 24px "Liberation Serif", serif;
    fill: #3f6cc8;
}
.glyph-style.glyph-violet {
    fill: #7a3fae;
}
.glyph-num {
    font: bold 11px "Liberation Sans", sans-serif;
    fill: #34489a;
}
.glyph-ab {
    font: 17px "Roboto Condensed", sans-serif;
}
.glyph-color {
    font: bold 30px "Liberation Serif", serif;
    fill: #41609f;
}
.glyph-sort {
    font: bold 19px "Liberation Serif", serif;
}
.glyph-blue {
    fill: #2c4fae;
}
.glyph-red {
    fill: #b02c2c;
}

/* Documento y reglas */
.workspace {
    flex: 1;
    min-height: 0;
    display: flex;
}
.view {
    flex: 1;
    min-width: 0;
    display: flex;
    flex-direction: column;
    background: #d8e7fc;
}
.ruler-row {
    display: flex;
    height: 55px;
}
.tab-type {
    width: 30px;
    height: 35px;
    margin: 8px 0 0 2px;
    border: 2px solid #4573c4;
    background: #e4eefd;
    display: flex;
    align-items: center;
    justify-content: center;
}
.tab-type svg {
    width: 12px;
    height: 16px;
}
.ruler-h {
    position: relative;
    width: 1428px;
    margin: 12px 0 0 275px;
}
.marks-h {
    display: flex;
    height: 29px;
    padding-right: 8px;
    background: linear-gradient(90deg, transparent 13px, #9dbdf3 13px 211px, #fff 211px 1224px, #d8e7fc 1224px 1229px, #9dbdf3 1229px);
}
.mark {
    flex: 1;
    min-width: 0;
    display: flex;
    align-items: center;
    justify-content: center;
}
.num {
    font-size: 21px;
}
.half::before, .dot::before {
    content: "";
    width: 2px;
    height: 12px;
    background: #000;
}
.dot::before {
    height: 5px;
}
.tabs {
    display: flex;
    width: 1014px;
    height: 6px;
    margin: 2px 0 0 212px;
}
.tabs span {
    flex: 1;
    border-right: 1px solid #5c6678;
}
.indent {
    position: absolute;
    width: 16px;
}
.indent-left {
    top: -7px;
    left: 204px;
    height: 49px;
}
.indent-right {
    top: 13px;
    left: 1217px;
    height: 18px;
}
.canvas {
    flex: 1;
    min-height: 0;
    display: flex;
}
.ruler-v {
    width: 39px;
    padding: 41px 0 0 4px;
    overflow: hidden;
}
.marks-v {
    width: 27px;
    padding-top: 29px;
    background: linear-gradient(#9dbdf3 206px, #d8e7fc 206px 210px, #fff 210px);
}
.marks-v .mark {
    height: 21px;
}
.marks-v .num {
    padding-right: 5px;
    font-size: 19px;
    writing-mode: vertical-rl;
    transform: rotate(180deg);
}
.marks-v .half::before {
    width: 9px;
    height: 2px;
}
.marks-v .dot::before {
    width: 4px;
    height: 3px;
}
.desk {
    flex: 1;
    padding: 36px 279px 0 277px;
    background: #9298b1;
}
.page {
    height: 100%;
    border: 2px solid #000;
    border-bottom: none;
    background: #fff;
    box-shadow: 4px 4px 0 #000;
}

/* Barra de desplazamiento */
.scrollbar {
    width: 31px;
    display: flex;
    flex-direction: column;
    padding-left: 2px;
    background: #f5f5f1;
}
.split {
    height: 13px;
    margin-bottom: 2px;
    border: 2px solid #000;
    border-width: 0 2px 3px 0;
    background: #ece9d8;
}
.scroll-up, .thumb {
    width: 27px;
    border: 2px solid #fff;
    border-radius: 4px;
    background: linear-gradient(90deg, #c9d8ff, #bcd0fc 80%, #a9c0f4);
    box-shadow: 0 1px 1px #7f9fd4;
    display: flex;
    align-items: center;
    justify-content: center;
}
.scroll-up {
    height: 36px;
    margin-bottom: 4px;
}
.scroll-up svg {
    width: 18px;
    height: 18px;
}
.thumb {
    height: 632px;
}
.grip {
    width: 12px;
    height: 16px;
    background: repeating-linear-gradient(#eef4ff 0 2px, #8caaf0 2px 4px);
}

/* Anotación sobre la ventana */
.pointer {
    position: absolute;
    top: 85px;
    left: 500px;
    width: 260px;
    height: 350px;
    pointer-events: none;
}
.callout {
    position: absolute;
    top: 428px;
    left: 620px;
    width: 776px;
    height: 260px;
    margin: 0;
    padding-top: 4px;
    display: flex;
    align-items: center;
    justify-content: center;
    border: 2px solid #000;
    border-radius: 50%;
    background: #bbe0e3;
    font: bold 34px/41px "Liberation Sans", Arial, sans-serif;
    text-align: center;
}
```
